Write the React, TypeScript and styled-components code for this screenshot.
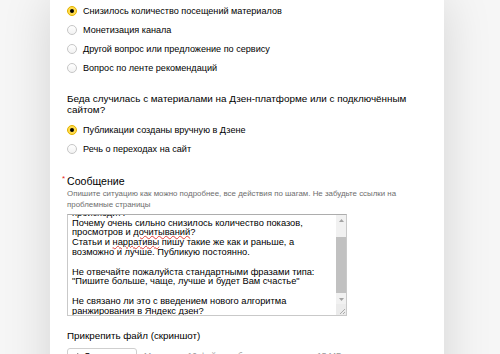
import React, { useLayoutEffect, useRef } from 'react';
import styled, { createGlobalStyle } from 'styled-components';

const GlobalStyle = createGlobalStyle`
  html, body {
    margin: 0;
    padding: 0;
  }
  body {
    background: #f6f6f6;
    font-family: "Liberation Sans", Arial, sans-serif;
    color: #000;
    overflow: hidden;
  }
`;

const Page = styled.div`
  width: 500px;
  height: 354px;
  overflow: hidden;
`;

const Card = styled.div`
  box-sizing: border-box;
  margin-left: 50px;
  width: 394px;
  min-height: 420px;
  padding: 1px 12px 0 17px;
  background: #fff;
  box-shadow: 0 0 46px rgba(0, 0, 0, 0.14);
`;

const RadioGroup = styled.div`
  display: flex;
  flex-direction: column;
`;

const RadioRow = styled.label`
  display: flex;
  align-items: center;
  gap: 6px;
  height: 19px;
  font-size: 9.1px;
  cursor: pointer;
`;

const RadioDot = styled.span<{ $checked?: boolean }>`
  flex: none;
  box-sizing: border-box;
  width: 10px;
  height: 10px;
  border-radius: 50%;
  display: flex;
  align-items: center;
  justify-content: center;
  border: 1px solid ${(p) => (p.$checked ? '#e3b300' : '#c6c6c6')};
  background: ${(p) => (p.$checked ? '#ffdb4d' : 'linear-gradient(#fff, #f2f2f2)')};
  &::after {
    content: '';
    display: ${(p) => (p.$checked ? 'block' : 'none')};
    width: 4px;
    height: 4px;
    border-radius: 50%;
    background: #000;
  }
`;

const Question = styled.div`
  margin: 16px 0 5px;
  font-size: 9.9px;
  line-height: 11px;
`;

const Field = styled.div`
  margin-top: 17px;
`;

const FieldLabel = styled.div`
  font-size: 10.6px;
  line-height: 13px;
`;

const Required = styled.span`
  display: inline-block;
  width: 5px;
  margin-left: -5px;
  color: #e52620;
  font-size: 8px;
  line-height: 0;
  vertical-align: 4px;
`;

const Hint = styled.div`
  font-size: 7.9px;
  line-height: 11px;
  color: #6e6e6e;
`;

const TextBox = styled.div`
  box-sizing: border-box;
  display: flex;
  margin-top: 4px;
  width: 280px;
  height: 102px;
  border: 1px solid #c9c9c9;
  border-top-color: #adadad;
  background: #fff;
`;

const TextContent = styled.div`
  flex: 1;
  overflow: hidden;
  padding: 2px 4px 8px;
  font-size: 9.3px;
  line-height: 9.8px;
`;

const TextLine = styled.div`
  min-height: 9.8px;
  white-space: nowrap;
`;

const Misspelled = styled.span`
  text-decoration: underline wavy #e0403a;
  text-decoration-thickness: 1px;
  text-underline-offset: 0;
`;

const Scrollbar = styled.div`
  flex: none;
  width: 10px;
  display: flex;
  flex-direction: column;
  background: #f1f1f1;
`;

const ScrollButton = styled.div<{ $h: number }>`
  flex: none;
  height: ${(p) => p.$h}px;
  display: flex;
  align-items: center;
  justify-content: center;
`;

const Track = styled.div`
  flex: 1;
  display: flex;
  flex-direction: column;
  padding: 11px 0 2px;
`;

const Thumb = styled.div`
  flex: 1;
  background: #c1c1c1;
`;

const Resizer = styled.div`
  flex: none;
  height: 11px;
  display: flex;
  align-items: flex-end;
  justify-content: flex-end;
  background: #ebebeb;
`;

const AttachTitle = styled.div`
  margin-top: 13px;
  font-size: 9.8px;
  line-height: 14px;
`;

const AttachRow = styled.div`
  display: flex;
  align-items: center;
  gap: 7px;
  margin-top: 5px;
`;

const UploadButton = styled.button`
  box-sizing: border-box;
  display: flex;
  align-items: center;
  gap: 5px;
  height: 15px;
  width: 70px;
  padding: 0 8px;
  border: 1px solid #cfcfcf;
  border-radius: 3px;
  background: #fff;
  font-family: inherit;
  font-size: 9.5px;
  color: #000;
`;

const AttachHint = styled.span`
  font-size: 8.6px;
  color: #9a9a9a;
`;

const Radio = ({ label, checked }: { label: string; checked?: boolean }) => (
  <RadioRow>
    <RadioDot $checked={checked} />
    {label}
  </RadioRow>
);

const TriangleUp = () => (
  <svg width="5" height="3" viewBox="0 0 5 3">
    <path d="M2.5 0L5 3H0z" fill="#a3a3a3" />
  </svg>
);

const TriangleDown = () => (
  <svg width="5" height="3" viewBox="0 0 5 3">
    <path d="M0 0H5L2.5 3z" fill="#a3a3a3" />
  </svg>
);

const App = () => {
  const textRef = useRef<HTMLDivElement>(null);

  useLayoutEffect(() => {
    if (textRef.current) textRef.current.scrollTop = 18;
  }, []);

  return (
    <Page>
      <GlobalStyle />
      <Card>
        <RadioGroup>
          <Radio label="Снизилось количество посещений материалов" checked />
          <Radio label="Монетизация канала" />
          <Radio label="Другой вопрос или предложение по сервису" />
          <Radio label="Вопрос по ленте рекомендаций" />
        </RadioGroup>

        <Question>
          Беда случилась с материалами на Дзен-платформе или с подключённым сайтом?
        </Question>

        <RadioGroup>
          <Radio label="Публикации созданы вручную в Дзене" checked />
          <Radio label="Речь о переходах на сайт" />
        </RadioGroup>

        <Field>
          <FieldLabel>
            <Required>*</Required>Сообщение
          </FieldLabel>
          <Hint>
            Опишите ситуацию как можно подробнее, все действия по шагам. Не забудьте ссылки на
            проблемные страницы
          </Hint>
          <TextBox>
            <TextContent ref={textRef}>
              <TextLine>Здравствуйте! Подскажите пожалуйста, что</TextLine>
              <TextLine>происходит?</TextLine>
              <TextLine>Почему очень сильно снизилось количество показов,</TextLine>
              <TextLine>
                просмотров и <Misspelled>дочитываний</Misspelled>?
              </TextLine>
              <TextLine>
                Статьи и <Misspelled>нарративы</Misspelled> пишу такие же как и раньше, а
              </TextLine>
              <TextLine>возможно и лучше. Публикую постоянно.</TextLine>
              <TextLine />
              <TextLine>Не отвечайте пожалуйста стандартными фразами типа:</TextLine>
              <TextLine>"Пишите больше, чаще, лучше и будет Вам счастье"</TextLine>
              <TextLine />
              <TextLine>Не связано ли это с введением нового алгоритма</TextLine>
              <TextLine>
                ранжирования в <Misspelled>Яндекс дзен</Misspelled>?
              </TextLine>
            </TextContent>
            <Scrollbar>
              <ScrollButton $h={11}>
                <TriangleUp />
              </ScrollButton>
              <Track>
                <Thumb />
              </Track>
              <ScrollButton $h={9}>
                <TriangleDown />
              </ScrollButton>
              <Resizer>
                <svg width="8" height="8" viewBox="0 0 8 8">
                  <path d="M7 2L2 7M7 5L5 7" stroke="#9a9a9a" strokeWidth="0.8" />
                </svg>
              </Resizer>
            </Scrollbar>
          </TextBox>
        </Field>

        <AttachTitle>Прикрепить файл (скриншот)</AttachTitle>
        <AttachRow>
          <UploadButton type="button">
            <svg width="7" height="9" viewBox="0 0 7 9">
              <path d="M3.5 0L7 4H4.6V9H2.4V4H0z" fill="#000" />
            </svg>
            Загрузить
          </UploadButton>
          <AttachHint>Максимум 10 файлов общим размером до 15 МБ</AttachHint>
        </AttachRow>
      </Card>
    </Page>
  );
};

export default App;
